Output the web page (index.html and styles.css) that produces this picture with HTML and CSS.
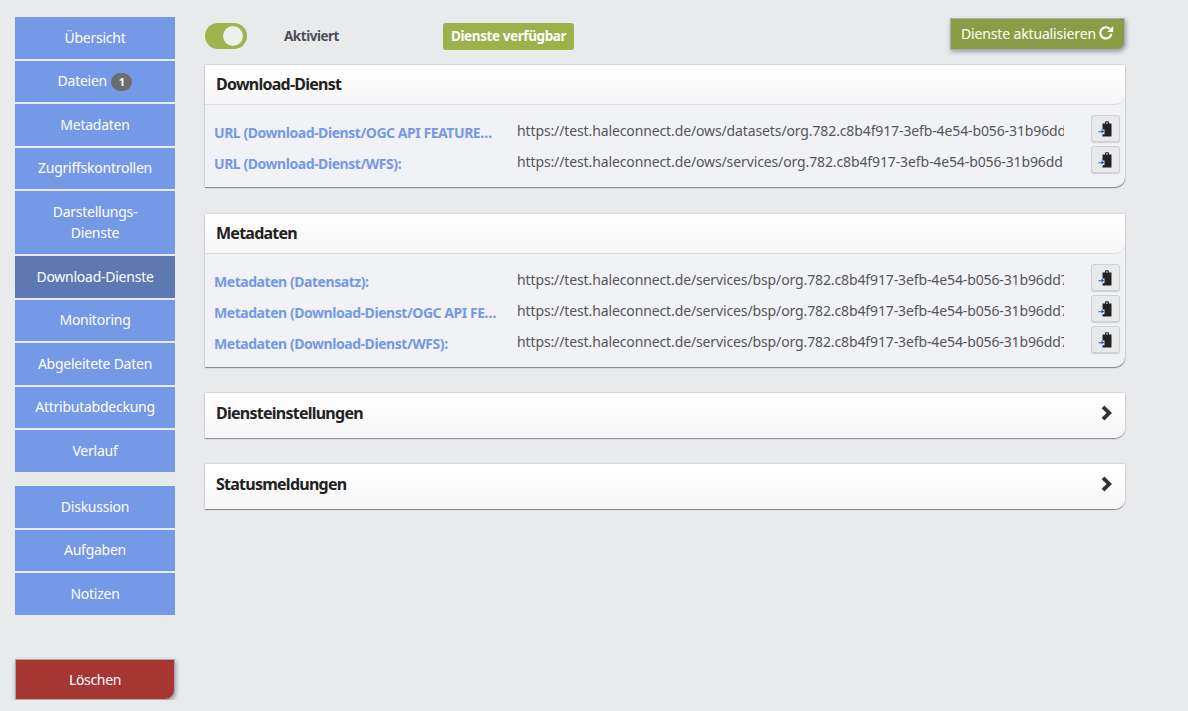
FILE: index.html
```html
<!DOCTYPE html>
<html lang="de">
<head>
  <meta charset="UTF-8">
  <title>Download-Dienste</title>
  <link rel="stylesheet" href="styles.css">
</head>
<body>
  <svg class="defs" width="0" height="0">
    <symbol id="copy-icon" viewBox="0 0 16 16">
      <path d="M4.500 2.500H7V1.500C7 .8 7.600.3 8.300.3h1.400c.7 0 1.300.5 1.300 1.200v1h2.500v13H4.500v-2.300H6.500V8.500h-2z" fill="#222"/>
      <path d="M8.300 1.300h1.400v1.400H8.300z" fill="#e8e9eb"/>
      <path d="M.5 10.200h3V8.600l2.800 2-2.800 2V11.200h-3z" fill="#2a55a8"/>
    </symbol>
    <symbol id="chevron-icon" viewBox="0 0 14 16">
      <path d="M4.400.5 12 8l-7.600 7.500L1.700 12.800 6.500 8 1.700 3.200z" fill="#333"/>
    </symbol>
  </svg>

  <div class="page">
    <nav class="sidebar">
      <div class="nav-group">
        <a class="nav-item">Übersicht</a>
        <a class="nav-item">Dateien <span class="badge">1</span></a>
        <a class="nav-item">Metadaten</a>
        <a class="nav-item">Zugriffskontrollen</a>
        <a class="nav-item">Darstellungs-<br>Dienste</a>
        <a class="nav-item active">Download-Dienste</a>
        <a class="nav-item">Monitoring</a>
        <a class="nav-item">Abgeleitete Daten</a>
        <a class="nav-item">Attributabdeckung</a>
        <a class="nav-item">Verlauf</a>
      </div>
      <div class="nav-group">
        <a class="nav-item">Diskussion</a>
        <a class="nav-item">Aufgaben</a>
        <a class="nav-item">Notizen</a>
      </div>
      <button class="delete-btn">Löschen</button>
    </nav>

    <main class="content">
      <div class="toolbar">
        <span class="toggle"><span class="toggle-knob"></span></span>
        <span class="toggle-label">Aktiviert</span>
        <span class="status">Dienste verfügbar</span>
        <button class="refresh-btn">Dienste aktualisieren
          <svg class="refresh-icon" viewBox="0 0 16 16" width="16" height="16">
            <path d="M13.400 8.600A5.600 5.600 0 1 1 11.800 3.900" fill="none" stroke="#fff" stroke-width="2.200"/>
            <path d="M15.200 .9v6h-6z" fill="#fff"/>
          </svg>
        </button>
      </div>

      <section class="panel">
        <h2 class="panel-head">Download-Dienst</h2>
        <div class="panel-body">
          <div class="row">
            <span class="row-label">URL (Download-Dienst/OGC API FEATURES&nbsp;):</span>
            <span class="row-url">https://test.haleconnect.de/ows/datasets/org.782.c8b4f917-3efb-4e54-b056-31b96dd</span>
            <button class="copy-btn"><svg width="16" height="16"><use href="#copy-icon"/></svg></button>
          </div>
          <div class="row">
            <span class="row-label">URL (Download-Dienst/WFS):</span>
            <span class="row-url">https://test.haleconnect.de/ows/services/org.782.c8b4f917-3efb-4e54-b056-31b96dd</span>
            <button class="copy-btn"><svg width="16" height="16"><use href="#copy-icon"/></svg></button>
          </div>
        </div>
      </section>

      <section class="panel">
        <h2 class="panel-head">Metadaten</h2>
        <div class="panel-body">
          <div class="row">
            <span class="row-label">Metadaten (Datensatz):</span>
            <span class="row-url">https://test.haleconnect.de/services/bsp/org.782.c8b4f917-3efb-4e54-b056-31b96dd7</span>
            <button class="copy-btn"><svg width="16" height="16"><use href="#copy-icon"/></svg></button>
          </div>
          <div class="row">
            <span class="row-label">Metadaten (Download-Dienst/OGC API FEATURES):</span>
            <span class="row-url">https://test.haleconnect.de/services/bsp/org.782.c8b4f917-3efb-4e54-b056-31b96dd7</span>
            <button class="copy-btn"><svg width="16" height="16"><use href="#copy-icon"/></svg></button>
          </div>
          <div class="row">
            <span class="row-label">Metadaten (Download-Dienst/WFS):</span>
            <span class="row-url">https://test.haleconnect.de/services/bsp/org.782.c8b4f917-3efb-4e54-b056-31b96dd7</span>
            <button class="copy-btn"><svg width="16" height="16"><use href="#copy-icon"/></svg></button>
          </div>
        </div>
      </section>

      <section class="panel collapsed">
        <h2 class="panel-head">Diensteinstellungen <svg width="14" height="16"><use href="#chevron-icon"/></svg></h2>
      </section>

      <section class="panel collapsed">
        <h2 class="panel-head">Statusmeldungen <svg width="14" height="16"><use href="#chevron-icon"/></svg></h2>
      </section>
    </main>
  </div>
</body>
</html>
```

FILE: styles.css
```css
body {
  margin: 0;
  background-color: #e9eaec;
  font-family: "Noto Sans", sans-serif;
  font-size: 14px;
  color: #444;
}

.defs {
  position: absolute;
}

.page {
  display: flex;
  align-items: flex-start;
  padding: 17px 0 0 15px;
}

/* sidebar */
.sidebar {
  width: 160px;
  flex-shrink: 0;
  display: flex;
  flex-direction: column;
  gap: 14.5px;
}

.nav-group {
  display: flex;
  flex-direction: column;
  gap: 2px;
}

.nav-item {
  display: block;
  padding: 9.750px 0 10.250px;
  background-color: #7499e6;
  color: #fff;
  font-size: 14px;
  line-height: 21.5px;
  text-align: center;
  letter-spacing: -0.25px;
}

.nav-item.active {
  background-color: #5d78b3;
}

.badge {
  display: inline-block;
  min-width: 21px;
  height: 18px;
  margin-left: 1px;
  border-radius: 9px;
  background-color: #6d6d6d;
  font-size: 11px;
  font-weight: bold;
  line-height: 18px;
  letter-spacing: 0;
  vertical-align: 0;
}

.delete-btn {
  width: 160px;
  height: 41px;
  margin-top: 30px;
  padding: 0;
  border: 1px solid #a9a9ad;
  border-radius: 0 0 10px 0;
  background-color: #a63632;
  box-shadow: 1px 2px 4px rgba(60, 60, 90, 0.45);
  color: #fff;
  font-family: inherit;
  font-size: 14px;
  letter-spacing: -0.35px;
}

/* main column */
.content {
  width: 920px;
  margin-left: 30px;
}

.toolbar {
  display: flex;
  align-items: flex-start;
  height: 48px;
}

.toggle {
  display: block;
  box-sizing: border-box;
  width: 42px;
  height: 26px;
  margin-top: 6px;
  padding: 3px 3px 3px 18px;
  border-radius: 13px;
  background-color: #9fb44c;
}

.toggle-knob {
  display: block;
  width: 20px;
  height: 20px;
  border-radius: 50%;
  background-color: #eef0ea;
}

.toggle-label {
  margin: 10px 0 0 37px;
  font-size: 13.500px;
  font-weight: bold;
  line-height: 19px;
  letter-spacing: -0.48px;
  color: #4d4f58;
}

.status {
  margin: 6px 0 0 104px;
  padding: 0 8px;
  height: 27px;
  border-radius: 3px;
  background-color: #9db14b;
  color: #fff;
  font-size: 13.500px;
  font-weight: bold;
  line-height: 26px;
  letter-spacing: -0.4px;
}

.refresh-btn {
  display: flex;
  align-items: center;
  gap: 2px;
  box-sizing: border-box;
  width: 175px;
  height: 32px;
  margin: 1px 0 0 auto;
  padding: 0 0 2px 10px;
  border: 1px solid #a8acb5;
  border-radius: 0 0 8px 0;
  background-color: #8b9d44;
  box-shadow: 1px 2px 4px rgba(60, 60, 90, 0.45);
  color: #fff;
  font-family: inherit;
  font-size: 14px;
  letter-spacing: -0.15px;
  white-space: nowrap;
}

.panel {
  margin-bottom: 26px;
  border-radius: 0 0 10px 0;
  background-color: #f1f2f5;
  box-shadow: 0 1px 1px rgba(60, 60, 80, 0.55), 0 0 2px rgba(60, 60, 80, 0.35);
}

.toolbar + .panel {
  margin-bottom: 27px;
}

.panel-head {
  display: flex;
  align-items: center;
  justify-content: space-between;
  box-sizing: border-box;
  height: 40px;
  margin: 0;
  padding: 0 11px 2px;
  border-bottom: 1px solid #dcdde0;
  border-radius: 0 0 10px 0;
  background: linear-gradient(#fff, #f6f6f7);
  color: #222;
  font-size: 16px;
  font-weight: bold;
  letter-spacing: -0.75px;
}

.panel-body {
  padding: 10px 5px 10px 9px;
}

.row {
  display: flex;
  align-items: center;
  height: 31px;
}

.row-label {
  width: 283px;
  flex-shrink: 0;
  overflow: hidden;
  padding-top: 3px;
  color: #7499e6;
  font-size: 14px;
  font-weight: bold;
  letter-spacing: -0.45px;
  text-overflow: ellipsis;
  white-space: nowrap;
}

.row-url {
  width: 547px;
  flex-shrink: 0;
  margin-left: 20px;
  overflow: hidden;
  color: #555;
  font-size: 14px;
  letter-spacing: -0.12px;
  white-space: nowrap;
}

.copy-btn {
  display: flex;
  align-items: center;
  justify-content: center;
  align-self: flex-start;
  box-sizing: border-box;
  width: 29px;
  height: 27px;
  margin-left: auto;
  padding: 0;
  border: 1px solid #d0d1d4;
  border-radius: 3px;
  background-color: #e8e9eb;
  box-shadow: 0 1px 1px rgba(0, 0, 0, 0.15);
}

.collapsed {
  background-color: #fff;
}

.collapsed .panel-head {
  height: 45px;
  border-bottom: 0;
  padding-bottom: 5px;
}
```
